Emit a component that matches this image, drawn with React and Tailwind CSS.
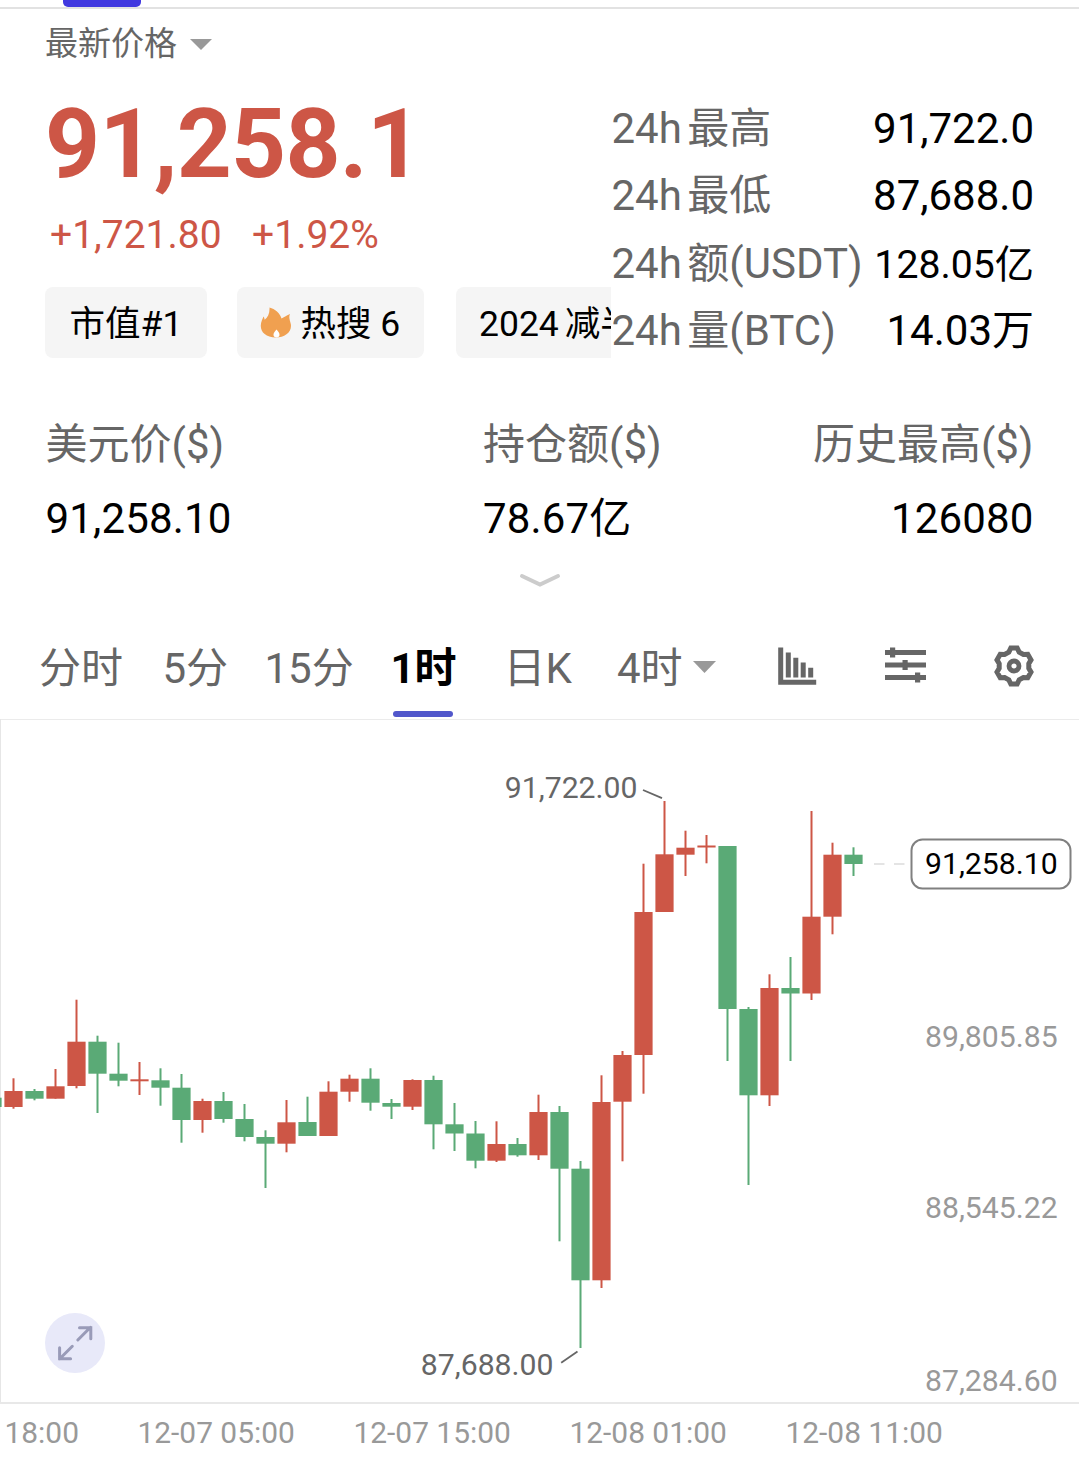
const GRAY = '#666666';
const RED = '#cd5646';
const GREEN = '#5aaa76';

// direction, high, low, body top, body bottom (page pixels)
const candles = [
  ['g', 1097.7, 1107, 1097.7, 1107],
  ['r', 1078.3, 1108.7, 1091, 1107],
  ['g', 1089, 1100.3, 1091, 1098.7],
  ['r', 1069, 1098.7, 1086.3, 1098.7],
  ['r', 999.7, 1088.3, 1041.7, 1086],
  ['g', 1035.7, 1113, 1041.7, 1073.7],
  ['g', 1042.7, 1086.3, 1073.7, 1080.7],
  ['r', 1062, 1095, 1079.3, 1081.3],
  ['g', 1068.3, 1105.7, 1080.3, 1087.7],
  ['g', 1074, 1142.7, 1087.7, 1120],
  ['r', 1098.7, 1132.7, 1101, 1120],
  ['g', 1092, 1122.7, 1101, 1119],
  ['g', 1104, 1141.3, 1119, 1137],
  ['g', 1130.3, 1188, 1137, 1143.7],
  ['r', 1100, 1152.3, 1122.3, 1143.7],
  ['g', 1096.7, 1136, 1122, 1136],
  ['r', 1081.3, 1136, 1091.7, 1136],
  ['r', 1074.7, 1101.7, 1078.7, 1091.7],
  ['g', 1068.3, 1110.7, 1078.7, 1102.7],
  ['g', 1099, 1119, 1103, 1106.7],
  ['r', 1079.3, 1110, 1080, 1106.7],
  ['g', 1075.7, 1149.3, 1080, 1124.3],
  ['g', 1103, 1151, 1124.3, 1133.5],
  ['g', 1121, 1168.3, 1133.5, 1160.7],
  ['r', 1121.3, 1162, 1144, 1160.7],
  ['g', 1138, 1156.7, 1144, 1155.3],
  ['r', 1094.7, 1160, 1112, 1155.3],
  ['g', 1106, 1241.3, 1112, 1168.7],
  ['g', 1161, 1348, 1168.7, 1280.3],
  ['r', 1075.3, 1288, 1102, 1280.3],
  ['r', 1051, 1161.3, 1055, 1101.7],
  ['r', 863.7, 1093.7, 912, 1055],
  ['r', 801, 912, 854.3, 912],
  ['r', 830.7, 876, 847.7, 854.7],
  ['r', 835, 863.3, 845.5, 847.5],
  ['g', 846, 1061, 846, 1009],
  ['g', 1007, 1185, 1009, 1095.3],
  ['r', 974.3, 1106, 988, 1095.3],
  ['g', 957, 1061, 988, 993.5],
  ['r', 811, 1000, 916.7, 993.5],
  ['r', 842.7, 934.3, 854.7, 916.7],
  ['g', 847.3, 876, 854.7, 864],
];

function Caret({ className }) {
  return (
    <svg className={className} viewBox="0 0 22 12" preserveAspectRatio="none" fill="#999999">
      <path d="M0 0h22L11 12z" />
    </svg>
  );
}

function QuoteRow({ prefix, label, value, small }) {
  return (
    <div className="flex h-[67.5px] items-center justify-between whitespace-nowrap">
      <span className="flex gap-[5.5px] text-[#666666]">
        <span>{prefix}</span>
        <span>{label}</span>
      </span>
      <span className={small ? 'pt-[2px] text-[39.2px] text-black' : 'text-black'}>{value}</span>
    </div>
  );
}

function Header() {
  return (
    <section className="flex h-[372px] justify-between pl-[45px] pr-[45px]">
      <div className="flex w-[566px] flex-col overflow-hidden">
        <div className="mt-[11px] flex h-[48px] items-center text-[33px] text-[#666666]">
          最新价格
          <Caret className="ml-[13px] h-[11px] w-[22px]" />
        </div>
        <div className="mt-[18px] h-[116px] text-[96px] leading-[116px] font-bold tracking-[-0.7px] text-[#cd5646]">91,258.1</div>
        <div className="mt-[9px] flex h-[48px] items-center gap-[30.500px] pl-[5px] text-[39px] text-[#cd5646]">
          <span>+1,721.80</span>
          <span>+1.92%</span>
        </div>
        <div className="mt-[28px] flex h-[71px] shrink-0 whitespace-nowrap text-[35.5px] text-black">
          <div className="flex w-[162px] shrink-0 items-center justify-center rounded-[8px] bg-[#f5f5f5] pt-[5px]">市值#1</div>
          <div className="ml-[30px] flex w-[187px] shrink-0 items-center rounded-[8px] bg-[#f5f5f5] pl-[23px]">
            <svg className="mr-[8.500px] h-[31px] w-[32px]" viewBox="0 0 32 31">
              <path
                d="M9.5 0.5C15 2 20 6 21.5 11.5c2.5-1 4.5-3 8.5-4.5-1.500 3-.2 6 .8 10 1.500 8-6 13.500-15 13.500C6 30.500.5 25 .8 18.500.9 14.500 2.800 11.500 3.500 9.500c.8 1.200 1 2.200 1.200 3.300C8 10 9.800 6 9.500.5z"
                fill="#f0a050"
              />
              <path d="M16.500 22.500c1.800 2 3 3.700 3 5.200 0 1.700-1.200 2.800-3 2.800s-3-1.100-3-2.800c0-1.500 1.200-3.200 3-5.200z" fill="#fff" />
            </svg>
            <span className="pt-[5px]">热搜 6</span>
          </div>
          <div className="ml-[32px] flex w-[230px] shrink-0 items-center gap-[6px] rounded-[8px] bg-[#f5f5f5] pt-[5px] pl-[23px]">
            <span>2024</span>
            <span>减半</span>
          </div>
        </div>
      </div>
      <div className="mt-[86px] w-[422.500px] text-[42px] leading-[60px]">
        <QuoteRow prefix="24h" label="最高" value="91,722.0" />
        <QuoteRow prefix="24h" label="最低" value="87,688.0" />
        <QuoteRow prefix="24h" label="额(USDT)" value="128.05亿" small />
        <QuoteRow prefix="24h" label="量(BTC)" value="14.03万" />
      </div>
    </section>
  );
}

function Stat({ label, value, className }) {
  return (
    <div className={className}>
      <div className="h-[75px] leading-[77px] text-[#666666]">{label}</div>
      <div className="h-[75px] leading-[75px] tracking-[0.15px] text-black">{value}</div>
    </div>
  );
}

function Stats() {
  return (
    <section className="flex h-[180px] pt-[25px] pl-[45.5px] pr-[45.5px] text-[42px]">
      <Stat label="美元价($)" value="91,258.10" className="w-[437.500px]" />
      <Stat label="持仓额($)" value="78.67亿" className="w-[250px]" />
      <Stat label="历史最高($)" value="126080" className="grow text-right" />
    </section>
  );
}

function BarsIcon() {
  return (
    <svg className="h-[38px] w-[39px]" viewBox="0 0 39 38" fill={GRAY}>
      <path d="M0.200 0.500h5v32.300h33v5H0.200zM7.800 5.500h5v25h-5zM15.300 10.800h5v19.700h-5zM22.700 15.500h5v15h-5zM30.200 20.800h5v9.700h-5z" />
    </svg>
  );
}

function SlidersIcon() {
  return (
    <svg className="h-[36px] w-[41px]" viewBox="0 0 41 36" fill={GRAY}>
      <path d="M0 3h41v5H0zM0 15.500h41v5H0zM0 28h41v5H0zM5 0.500h5.200v10H5zM17.500 13h5.200v10h-5.200zM30 25.500h5.200v10H30z" />
    </svg>
  );
}

function GearIcon() {
  return (
    <svg className="h-[42px] w-[42px]" viewBox="-21 -21 42 42" fill="none" stroke={GRAY}>
      <path
        strokeWidth="5"
        d="M-3.200-17.900L3.200-17.900 5.200-13.900 9.400-11.500 13.800-11.700 17-6.100 14.800-2.400 14.800 2.400 17 6.100 13.800 11.700 9.400 11.500 5.200 13.900 3.200 17.900-3.200 17.900-5.200 13.900-9.400 11.500-13.800 11.700-17 6.100-14.800 2.400-14.800-2.400-17-6.100-13.800-11.700-9.400-11.500-5.200-13.900z"
      />
      <circle r="5" strokeWidth="4.800" />
    </svg>
  );
}

function Tabs() {
  return (
    <nav className="flex h-[108px] items-center border-b border-[#ebebeb] pl-[39px] text-[42px] text-[#666666]">
      <span className="w-[123.500px] pt-[6px]">分时</span>
      <span className="w-[102px] pt-[6px]">5分</span>
      <span className="w-[126px] pt-[6px]">15分</span>
      <span className="flex h-full w-[113px] flex-col font-bold text-black">
        <span className="h-[99px] leading-[113px]">1时</span>
        <span className="ml-[2.500px] h-[6px] w-[60px] shrink-0 rounded-full bg-[#5157cb]" />
      </span>
      <span className="w-[113.500px] pt-[6px]">日K</span>
      <span className="flex w-[161px] items-center">
        <span className="pt-[6px]">4时</span>
        <Caret className="ml-[10px] mt-[2px] h-[12px] w-[23px]" />
      </span>
      <BarsIcon />
      <span className="-mt-[2px] ml-[67.500px]">
        <SlidersIcon />
      </span>
      <span className="ml-[67.500px]">
        <GearIcon />
      </span>
    </nav>
  );
}

function Chart() {
  return (
    <svg className="block h-[685px] w-[1079px]" viewBox="0 719 1079 685" fontSize="30.200">
      <rect x="0" y="719" width="1" height="684" fill="#e6e6e6" />
      <rect x="0" y="1402" width="1079" height="2" fill="#e8e8e8" />
      {candles.map(([dir, high, low, top, bottom], i) => {
        const cx = 13.5 + 21 * (i - 1);
        return (
          <g key={i} fill={dir === 'r' ? RED : GREEN}>
            <rect x={cx - 1} y={high} width="2" height={low - high} />
            <rect x={cx - 9.100} y={top} width="18.200" height={bottom - top} />
          </g>
        );
      })}
      <g stroke={GRAY} strokeWidth="1.800">
        <path d="M643 790l19 8.200M561.200 1362.800l16.300-11.300" />
      </g>
      <path d="M874 864h10.500M894 864h10.500" stroke="#dcdcdc" strokeWidth="1.500" />
      <text x="504.800" y="798" fill={GRAY}>91,722.00</text>
      <text x="420.800" y="1375" fill={GRAY}>87,688.00</text>
      <g fill="#999999">
        <text x="925" y="1047">89,805.85</text>
        <text x="925" y="1218">88,545.22</text>
        <text x="925" y="1391">87,284.60</text>
      </g>
      <rect x="911.500" y="839.500" width="159" height="49" rx="11" fill="#fff" stroke="#808080" strokeWidth="2" />
      <text x="925" y="874" fill="#000">91,258.10</text>
      <circle cx="75" cy="1343" r="30" fill="#e8e9f9" />
      <path
        d="M77.800 1340l12.700-12.700M79.500 1327.700h11.300v11M72.300 1346.300l-12.500 12.500M59.600 1347.800v11h11"
        fill="none"
        stroke="#999bb8"
        strokeWidth="3"
        strokeLinecap="round"
      />
    </svg>
  );
}

export default function App() {
  return (
    <main className="h-[1473px] w-[1079px] overflow-hidden bg-white font-['Roboto','Noto_Sans_CJK_SC',sans-serif]">
      <div className="h-[9px] border-b-2 border-[#e2e2e2] pl-[63px]">
        <div className="h-[7px] w-[78px] rounded-b-[5px] bg-[#4038e0]" />
      </div>
      <Header />
      <Stats />
      <div className="flex h-[51px] justify-center pt-[12px]">
        <svg className="h-[15px] w-[42px]" viewBox="0 0 42 15" fill="none" stroke="#cccccc" strokeWidth="4" strokeLinecap="round">
          <path d="M3 3l18 8.500L39 3" />
        </svg>
      </div>
      <Tabs />
      <div className="-mt-px">
        <Chart />
      </div>
      <div className="flex h-[58px] items-center whitespace-nowrap pl-[0.5px] text-[29.900px] text-[#999999]">
        <span className="w-[137px] pl-[4px]">18:00</span>
        <span className="w-[216px]">12-07 05:00</span>
        <span className="w-[216px]">12-07 15:00</span>
        <span className="w-[216px]">12-08 01:00</span>
        <span>12-08 11:00</span>
      </div>
    </main>
  );
}
